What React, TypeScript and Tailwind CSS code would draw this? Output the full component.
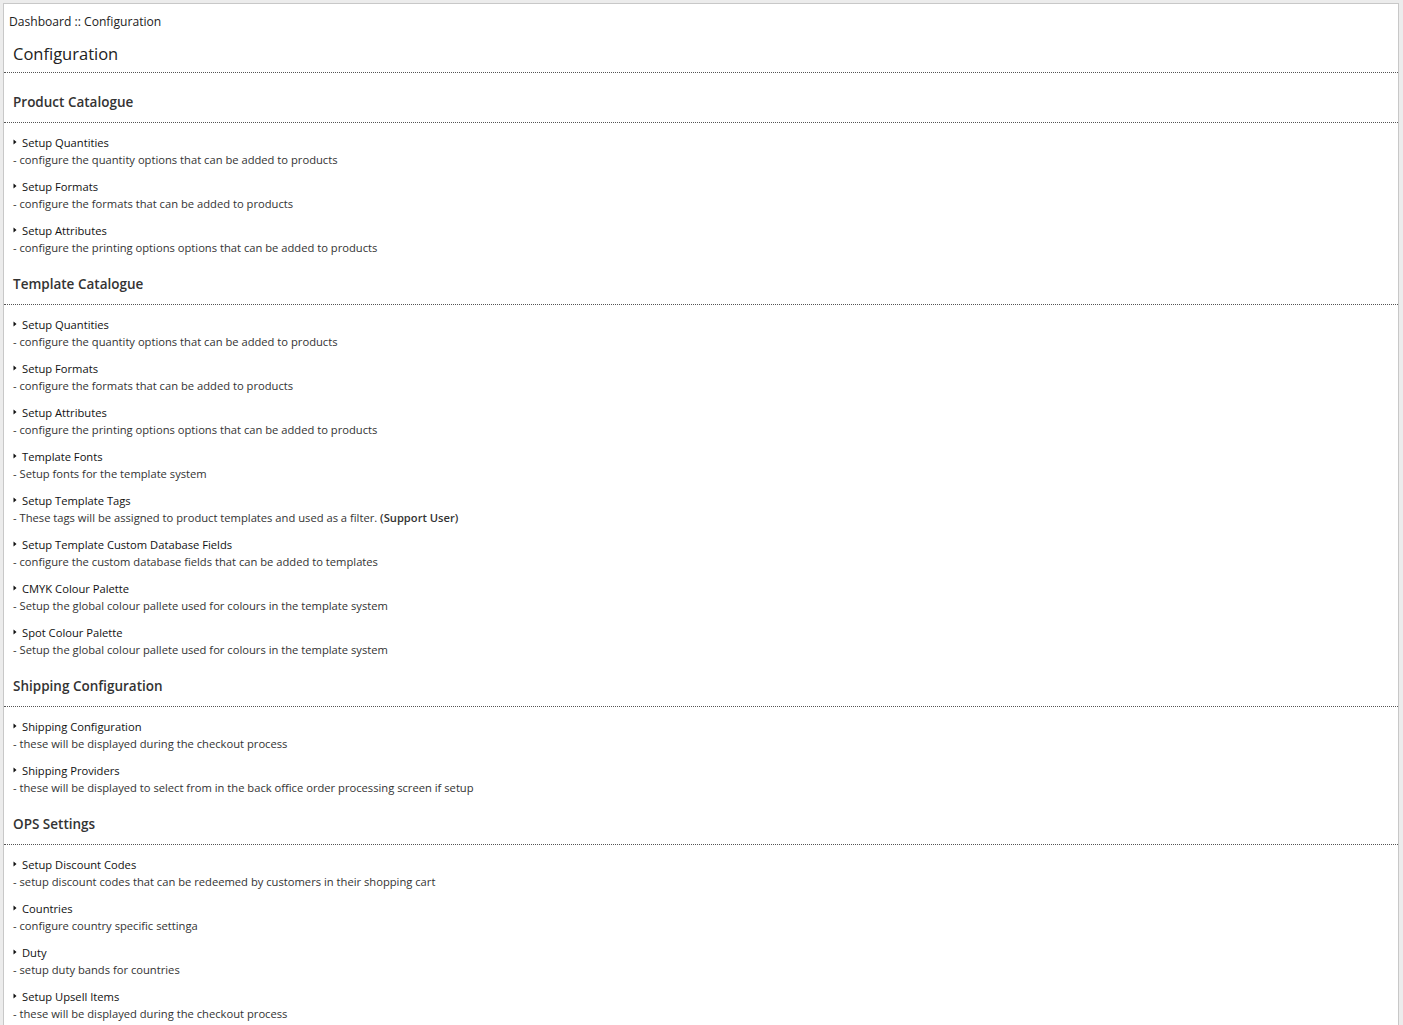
import React from "react";

type Item = { title: string; desc: React.ReactNode };
type Section = { heading: string; items: Item[] };

const sections: Section[] = [
  {
    heading: "Product Catalogue",
    items: [
      { title: "Setup Quantities", desc: "configure the quantity options that can be added to products" },
      { title: "Setup Formats", desc: "configure the formats that can be added to products" },
      { title: "Setup Attributes", desc: "configure the printing options options that can be added to products" },
    ],
  },
  {
    heading: "Template Catalogue",
    items: [
      { title: "Setup Quantities", desc: "configure the quantity options that can be added to products" },
      { title: "Setup Formats", desc: "configure the formats that can be added to products" },
      { title: "Setup Attributes", desc: "configure the printing options options that can be added to products" },
      { title: "Template Fonts", desc: "Setup fonts for the template system" },
      {
        title: "Setup Template Tags",
        desc: (
          <>
            These tags will be assigned to product templates and used as a filter. <b className="font-semibold">(Support User)</b>
          </>
        ),
      },
      { title: "Setup Template Custom Database Fields", desc: "configure the custom database fields that can be added to templates" },
      { title: "CMYK Colour Palette", desc: "Setup the global colour pallete used for colours in the template system" },
      { title: "Spot Colour Palette", desc: "Setup the global colour pallete used for colours in the template system" },
    ],
  },
  {
    heading: "Shipping Configuration",
    items: [
      { title: "Shipping Configuration", desc: "these will be displayed during the checkout process" },
      { title: "Shipping Providers", desc: "these will be displayed to select from in the back office order processing screen if setup" },
    ],
  },
  {
    heading: "OPS Settings",
    items: [
      { title: "Setup Discount Codes", desc: "setup discount codes that can be redeemed by customers in their shopping cart" },
      { title: "Countries", desc: "configure country specific settinga" },
      { title: "Duty", desc: "setup duty bands for countries" },
      { title: "Setup Upsell Items", desc: "these will be displayed during the checkout process" },
    ],
  },
];

// small bullet triangle
const Arrow = () => (
  <svg width="9" height="17" viewBox="0 0 9 17" className="shrink-0">
    <path d="M0.5 5.5 L3.5 8 L0.5 10.5 Z" fill="#111" />
  </svg>
);

export default function App() {
  return (
    <div
      className="min-h-screen bg-[#ececec] pt-[3px] pl-[3px] pr-[4px] text-[#222]"
      style={{ fontFamily: '"Open Sans", "Noto Sans", sans-serif' }}
    >
      <div className="bg-white border border-[#c8c8c8] min-h-[1030px]">
        <div className="pl-[5px] pt-[9px] text-[12.1px] leading-[18px] text-[#222]">Dashboard :: Configuration</div>
        <h1 className="pl-[9px] mt-[11px] pb-[6px] text-[16.5px] leading-[24px] text-[#222] border-b border-dotted border-[#555]">
          Configuration
        </h1>

        {sections.map((section, si) => (
          <div key={section.heading}>
            <h2
              className={
                (si === 0 ? "pt-[19px] " : "pt-[18px] ") +
                "pl-[9px] pb-[10px] text-[13.5px] leading-[20px] font-semibold text-[#333] border-b border-dotted border-[#555]"
              }
            >
              {section.heading}
            </h2>
            <div className="pl-[9px] pt-[11px] flex flex-col gap-[10px]">
              {section.items.map((item, i) => (
                <div key={i} className="text-[11.2px] leading-[17px]">
                  <div className="flex items-center">
                    <Arrow />
                    <span className="text-[#111]">{item.title}</span>
                  </div>
                  <div className="text-[#333]">- {item.desc}</div>
                </div>
              ))}
            </div>
          </div>
        ))}
      </div>
    </div>
  );
}
